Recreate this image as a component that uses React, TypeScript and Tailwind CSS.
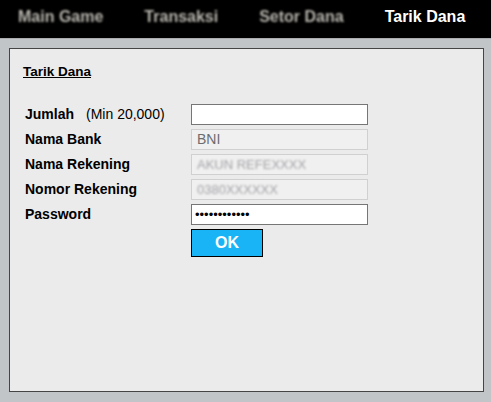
import { useState } from "react";

const NAV = ["Main Game", "Transaksi", "Setor Dana", "Tarik Dana"];

export default function App() {
  const [jumlah, setJumlah] = useState("");
  const [pwd, setPwd] = useState("************");

  return (
    <div
      className="h-[402px] w-full bg-[#c1c5c7] overflow-hidden"
      style={{ fontFamily: '"Liberation Sans", Arial, sans-serif' }}
    >
      {/* Top nav */}
      <nav className="h-[39px] bg-black flex items-center pl-[18px] pb-[4px] gap-[41px] border-b border-[#a9adaf]">
        {NAV.map((n, i) =>
          i === NAV.length - 1 ? (
            <span key={n} className="text-white font-bold text-[16px]">
              {n}
            </span>
          ) : (
            <span key={n} className="text-[#b9b6ae] font-bold text-[16px] blur-[0.8px]">
              {n}
            </span>
          )
        )}
      </nav>

      <div className="pt-[9px] pl-[9px]">
        <div className="w-[475px] h-[344px] border border-[#454545] bg-[#ebebeb] pl-[13px] pt-[15px]">
          <h3 className="text-[13.5px] font-bold underline text-black leading-[16px]">Tarik Dana</h3>

          <div className="mt-[24px] pl-[2px] flex flex-col gap-[4px]">
            <div className="flex items-center h-[21px]">
              <div className="w-[166px] text-[14px] text-black">
                <span className="font-bold">Jumlah</span>
                <span className="ml-[12px]">(Min 20,000)</span>
              </div>
              <input
                value={jumlah}
                onChange={(e) => setJumlah(e.target.value)}
                className="w-[177px] h-[21px] bg-white border border-[#767676] outline-none px-1 text-[14px]"
              />
            </div>

            <div className="flex items-center h-[21px]">
              <div className="w-[166px] text-[14px] font-bold text-black">Nama Bank</div>
              <div className="w-[177px] h-[21px] bg-[#f0f0f0] border border-[#d0d0d0] pl-[5px] text-[14px] text-[#6d6d6d] leading-[19px]">
                BNI
              </div>
            </div>

            <div className="flex items-center h-[21px]">
              <div className="w-[166px] text-[14px] font-bold text-black">Nama Rekening</div>
              <div className="w-[177px] h-[21px] bg-[#f0f0f0] border border-[#d0d0d0] pl-[5px] text-[13px] leading-[19px]">
                <span className="text-[#a3a3a8] blur-[0.9px] inline-block">AKUN REFEXXXX</span>
              </div>
            </div>

            <div className="flex items-center h-[21px]">
              <div className="w-[166px] text-[14px] font-bold text-black">Nomor Rekening</div>
              <div className="w-[177px] h-[21px] bg-[#f0f0f0] border border-[#d0d0d0] pl-[5px] text-[13px] leading-[19px]">
                <span className="text-[#a3a3a8] blur-[0.9px] inline-block">0380XXXXXX</span>
              </div>
            </div>

            <div className="flex items-center h-[21px]">
              <div className="w-[166px] text-[14px] font-bold text-black">Password</div>
              <input
                type="password"
                value={pwd}
                onChange={(e) => setPwd(e.target.value)}
                className="w-[177px] h-[21px] bg-white border border-[#767676] outline-none pl-[3px] text-[13px]"
              />
            </div>

            <div className="flex">
              <div className="w-[166px]" />
              <button className="w-[72px] h-[28px] bg-[#19b4f5] border border-black text-white font-bold text-[16px]">
                OK
              </button>
            </div>
          </div>
        </div>
      </div>
    </div>
  );
}
